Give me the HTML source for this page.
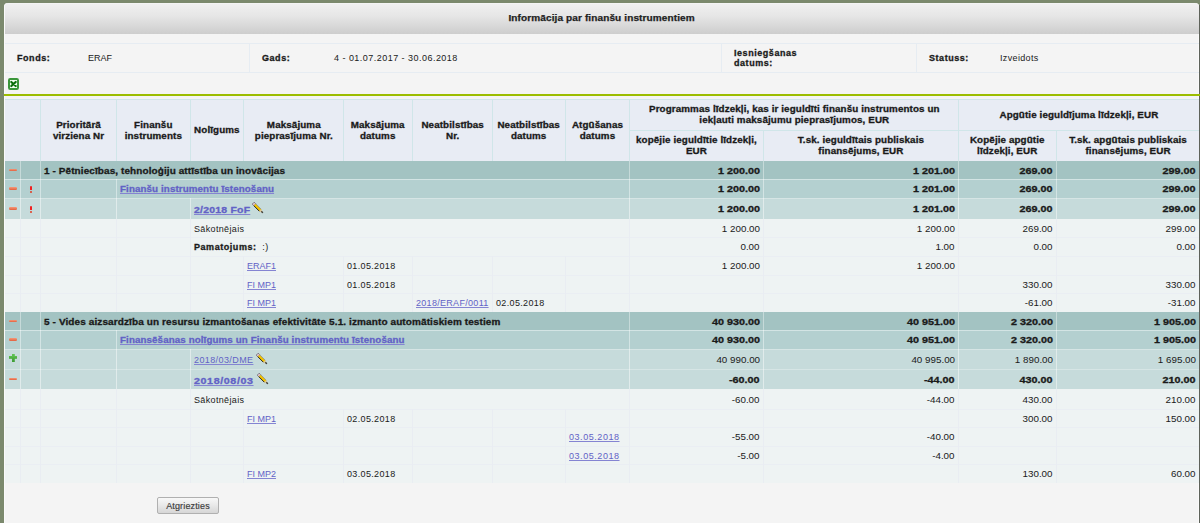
<!DOCTYPE html>
<html><head><meta charset="utf-8"><style>
html,body{margin:0;padding:0}
body{width:1200px;height:523px;overflow:hidden;position:relative;background:#7b896d;font-family:"Liberation Sans", sans-serif;font-size:9px;letter-spacing:0.35px;color:#1a1a1a}
#panel{position:absolute;left:4px;top:3px;width:1195px;height:540px;background:#f4f4f4;border-radius:4px 4px 0 0;box-shadow:inset 1px 0 0 #fafafa, inset -1px 0 0 #fafafa}
#shadow{position:absolute;left:1199px;top:5px;width:1px;height:520px;background:#5e625a}
#title{position:absolute;left:5px;top:4px;width:1194px;height:28px;padding-bottom:2px;background:linear-gradient(#f0f0f0,#e6e6e6 40%,#cdcdcd);border-radius:2px 2px 0 0;display:flex;align-items:center;justify-content:center;font-weight:bold;font-size:9px;letter-spacing:0.1px;-webkit-text-stroke:0.25px #222;color:#222}
.b,b{font-weight:bold;letter-spacing:0.55px;-webkit-text-stroke:0.3px currentColor}
.n{display:inline-block;letter-spacing:0;transform:scaleX(1.09);transform-origin:100% 50%}
.nb{display:inline-block;font-weight:bold;letter-spacing:0;transform:scaleX(1.2);transform-origin:100% 50%;-webkit-text-stroke:0.3px currentColor}
a{color:#6262c6;text-decoration:underline;text-decoration-color:#8484d2}
.lc{letter-spacing:0}
.ld{letter-spacing:0.55px}
.pen{position:absolute;left:calc(100% + 3px);top:-2px}
.pw{position:relative}
.info{position:absolute;top:57.5px;transform:translateY(-50%);white-space:nowrap}
</style></head><body>
<div id="panel"></div>
<div id="shadow"></div>
<div id="title"><span style="display:inline-block;letter-spacing:0.1px;transform:scaleX(1.115)">Informācija par finanšu instrumentiem</span></div>
<div style="position:absolute;left:5px;top:43px;width:1194px;height:1px;background:#e6ecf2"></div>
<div style="position:absolute;left:5px;top:72px;width:1194px;height:1px;background:#e6ecf2"></div>
<div style="position:absolute;left:249px;top:44px;width:1px;height:28px;background:#e6ecf2"></div>
<div style="position:absolute;left:721px;top:44px;width:1px;height:28px;background:#e6ecf2"></div>
<div style="position:absolute;left:916px;top:44px;width:1px;height:28px;background:#e6ecf2"></div>
<div class="info b" style="left:17px">Fonds:</div>
<div class="info" style="left:88px;letter-spacing:0">ERAF</div>
<div class="info b" style="left:262px">Gads:</div>
<div class="info" style="left:334px;letter-spacing:0.47px">4 - 01.07.2017 - 30.06.2018</div>
<div class="info b" style="left:734px;line-height:10px;top:58px">Iesniegšanas<br>datums:</div>
<div class="info b" style="left:929px">Statuss:</div>
<div class="info" style="left:1000px">Izveidots</div>
<svg style="position:absolute;left:8px;top:78px" width="11" height="12" viewBox="0 0 11 12">
<rect x="1" y="1" width="9" height="10" rx="1.2" fill="#f4fff4" stroke="#3a963a" stroke-width="2"/>
<path d="M3.3 4 L7.7 8 M7.7 4 L3.3 8" stroke="#0b6e0b" stroke-width="2.2" stroke-linecap="round"/></svg>
<div style="position:absolute;left:4px;top:94px;width:1196px;height:2px;background:#9cbd00"></div>
<div style="position:absolute;left:5px;top:99px;width:1194px;height:62px;background:#d0e6e9"></div>
<div style="position:absolute;left:5px;top:100px;width:35px;height:61px;background:#e8ecf4;display:flex;align-items:center;justify-content:center;text-align:center;font-weight:bold;letter-spacing:0.1px;-webkit-text-stroke:0.3px #1a1a1a;line-height:11px"><span style="display:inline-block;letter-spacing:0.1px;transform:scaleX(1.09)"></span></div>
<div style="position:absolute;left:41px;top:100px;width:75px;height:61px;background:#e8ecf4;display:flex;align-items:center;justify-content:center;text-align:center;font-weight:bold;letter-spacing:0.1px;-webkit-text-stroke:0.3px #1a1a1a;line-height:11px"><span style="display:inline-block;letter-spacing:0.1px;transform:scaleX(1.09)">Prioritārā<br>virziena Nr</span></div>
<div style="position:absolute;left:117px;top:100px;width:73px;height:61px;background:#e8ecf4;display:flex;align-items:center;justify-content:center;text-align:center;font-weight:bold;letter-spacing:0.1px;-webkit-text-stroke:0.3px #1a1a1a;line-height:11px"><span style="display:inline-block;letter-spacing:0.1px;transform:scaleX(1.09)">Finanšu<br>instruments</span></div>
<div style="position:absolute;left:191px;top:100px;width:52px;height:61px;background:#e8ecf4;display:flex;align-items:center;justify-content:center;text-align:center;font-weight:bold;letter-spacing:0.1px;-webkit-text-stroke:0.3px #1a1a1a;line-height:11px"><span style="display:inline-block;letter-spacing:0.1px;transform:scaleX(1.09)">Nolīgums</span></div>
<div style="position:absolute;left:244px;top:100px;width:99px;height:61px;background:#e8ecf4;display:flex;align-items:center;justify-content:center;text-align:center;font-weight:bold;letter-spacing:0.1px;-webkit-text-stroke:0.3px #1a1a1a;line-height:11px"><span style="display:inline-block;letter-spacing:0.1px;transform:scaleX(1.09)">Maksājuma<br>pieprasījuma Nr.</span></div>
<div style="position:absolute;left:344px;top:100px;width:68px;height:61px;background:#e8ecf4;display:flex;align-items:center;justify-content:center;text-align:center;font-weight:bold;letter-spacing:0.1px;-webkit-text-stroke:0.3px #1a1a1a;line-height:11px"><span style="display:inline-block;letter-spacing:0.1px;transform:scaleX(1.09)">Maksājuma<br>datums</span></div>
<div style="position:absolute;left:413px;top:100px;width:79px;height:61px;background:#e8ecf4;display:flex;align-items:center;justify-content:center;text-align:center;font-weight:bold;letter-spacing:0.1px;-webkit-text-stroke:0.3px #1a1a1a;line-height:11px"><span style="display:inline-block;letter-spacing:0.1px;transform:scaleX(1.09)">Neatbilstības<br>Nr.</span></div>
<div style="position:absolute;left:493px;top:100px;width:72px;height:61px;background:#e8ecf4;display:flex;align-items:center;justify-content:center;text-align:center;font-weight:bold;letter-spacing:0.1px;-webkit-text-stroke:0.3px #1a1a1a;line-height:11px"><span style="display:inline-block;letter-spacing:0.1px;transform:scaleX(1.09)">Neatbilstības<br>datums</span></div>
<div style="position:absolute;left:566px;top:100px;width:63px;height:61px;background:#e8ecf4;display:flex;align-items:center;justify-content:center;text-align:center;font-weight:bold;letter-spacing:0.1px;-webkit-text-stroke:0.3px #1a1a1a;line-height:11px"><span style="display:inline-block;letter-spacing:0.1px;transform:scaleX(1.09)">Atgūšanas<br>datums</span></div>
<div style="position:absolute;left:630px;top:100px;width:328px;height:30px;background:#e8ecf4;display:flex;align-items:center;justify-content:center;text-align:center;font-weight:bold;letter-spacing:0.1px;-webkit-text-stroke:0.3px #1a1a1a;line-height:11px"><span style="display:inline-block;letter-spacing:0.1px;transform:scaleX(1.09)">Programmas līdzekļi, kas ir ieguldīti finanšu instrumentos un<br>iekļauti maksājumu pieprasījumos, EUR</span></div>
<div style="position:absolute;left:959px;top:100px;width:240px;height:30px;background:#e8ecf4;display:flex;align-items:center;justify-content:center;text-align:center;font-weight:bold;letter-spacing:0.1px;-webkit-text-stroke:0.3px #1a1a1a;line-height:11px"><span style="display:inline-block;letter-spacing:0.1px;transform:scaleX(1.09)">Apgūtie ieguldījuma līdzekļi, EUR</span></div>
<div style="position:absolute;left:630px;top:131px;width:133px;height:30px;background:#e8ecf4;display:flex;align-items:center;justify-content:center;text-align:center;font-weight:bold;letter-spacing:0.1px;-webkit-text-stroke:0.3px #1a1a1a;line-height:11px"><span style="display:inline-block;letter-spacing:0.1px;transform:scaleX(1.09)">kopējie ieguldītie līdzekļi,<br>EUR</span></div>
<div style="position:absolute;left:764px;top:131px;width:194px;height:30px;background:#e8ecf4;display:flex;align-items:center;justify-content:center;text-align:center;font-weight:bold;letter-spacing:0.1px;-webkit-text-stroke:0.3px #1a1a1a;line-height:11px"><span style="display:inline-block;letter-spacing:0.1px;transform:scaleX(1.09)">T.sk. ieguldītais publiskais<br>finansējums, EUR</span></div>
<div style="position:absolute;left:959px;top:131px;width:97px;height:30px;background:#e8ecf4;display:flex;align-items:center;justify-content:center;text-align:center;font-weight:bold;letter-spacing:0.1px;-webkit-text-stroke:0.3px #1a1a1a;line-height:11px"><span style="display:inline-block;letter-spacing:0.1px;transform:scaleX(1.09)">Kopējie apgūtie<br>līdzekļi, EUR</span></div>
<div style="position:absolute;left:1057px;top:131px;width:142px;height:30px;background:#e8ecf4;display:flex;align-items:center;justify-content:center;text-align:center;font-weight:bold;letter-spacing:0.1px;-webkit-text-stroke:0.3px #1a1a1a;line-height:11px"><span style="display:inline-block;letter-spacing:0.1px;transform:scaleX(1.09)">T.sk. apgūtais publiskais<br>finansējums, EUR</span></div>
<div style="position:absolute;left:5px;top:161px;width:1194px;height:18px;background:#a3c3c2"></div>
<div style="position:absolute;left:40px;top:161px;width:1px;height:18px;background:rgba(255,255,255,0.38)"></div>
<div style="position:absolute;left:41px;top:162px;width:588px;height:17px;display:flex;align-items:center;justify-content:flex-start;padding:0 4px 0 3px;box-sizing:border-box;white-space:nowrap"><span class="b pw"><span style="display:inline-block;letter-spacing:0.1px;transform:scaleX(1.105);transform-origin:0 50%">1 - Pētniecības, tehnoloģiju attīstība un inovācijas</span></span></div>
<div style="position:absolute;left:629px;top:161px;width:1px;height:18px;background:rgba(255,255,255,0.38)"></div>
<div style="position:absolute;left:630px;top:162px;width:133px;height:17px;display:flex;align-items:center;justify-content:flex-end;padding:0 3px 0 0;box-sizing:border-box;white-space:nowrap"><span class="nb pw">1 200.00</span></div>
<div style="position:absolute;left:763px;top:161px;width:1px;height:18px;background:rgba(255,255,255,0.38)"></div>
<div style="position:absolute;left:764px;top:162px;width:194px;height:17px;display:flex;align-items:center;justify-content:flex-end;padding:0 3px 0 0;box-sizing:border-box;white-space:nowrap"><span class="nb pw">1 201.00</span></div>
<div style="position:absolute;left:958px;top:161px;width:1px;height:18px;background:rgba(255,255,255,0.38)"></div>
<div style="position:absolute;left:959px;top:162px;width:97px;height:17px;display:flex;align-items:center;justify-content:flex-end;padding:0 3px 0 0;box-sizing:border-box;white-space:nowrap"><span class="nb pw">269.00</span></div>
<div style="position:absolute;left:1056px;top:161px;width:1px;height:18px;background:rgba(255,255,255,0.38)"></div>
<div style="position:absolute;left:1057px;top:162px;width:142px;height:17px;display:flex;align-items:center;justify-content:flex-end;padding:0 3px 0 0;box-sizing:border-box;white-space:nowrap"><span class="nb pw">299.00</span></div>
<div style="position:absolute;left:20px;top:161px;width:1px;height:18px;background:rgba(255,255,255,0.38)"></div>
<div style="position:absolute;left:9px;top:168.5px;width:8px;height:2.5px;border-radius:1.25px;background:linear-gradient(#f49a7a,#e2603e)"></div>
<div style="position:absolute;left:5px;top:179px;width:1194px;height:19px;background:#b4d0d0"></div>
<div style="position:absolute;left:5px;top:179px;width:1194px;height:1px;background:rgba(255,255,255,0.42)"></div>
<div style="position:absolute;left:20px;top:179px;width:1px;height:19px;background:rgba(255,255,255,0.42)"></div>
<div style="position:absolute;left:116px;top:179px;width:1px;height:19px;background:rgba(255,255,255,0.42)"></div>
<div style="position:absolute;left:117px;top:180px;width:512px;height:18px;display:flex;align-items:center;justify-content:flex-start;padding:0 4px 0 3px;box-sizing:border-box;white-space:nowrap"><span class="b pw"><a style="display:inline-block;letter-spacing:0.1px;transform:scaleX(1.085);transform-origin:0 50%">Finanšu instrumentu īstenošanu</a></span></div>
<div style="position:absolute;left:629px;top:179px;width:1px;height:19px;background:rgba(255,255,255,0.42)"></div>
<div style="position:absolute;left:630px;top:180px;width:133px;height:18px;display:flex;align-items:center;justify-content:flex-end;padding:0 3px 0 0;box-sizing:border-box;white-space:nowrap"><span class="nb pw">1 200.00</span></div>
<div style="position:absolute;left:763px;top:179px;width:1px;height:19px;background:rgba(255,255,255,0.42)"></div>
<div style="position:absolute;left:764px;top:180px;width:194px;height:18px;display:flex;align-items:center;justify-content:flex-end;padding:0 3px 0 0;box-sizing:border-box;white-space:nowrap"><span class="nb pw">1 201.00</span></div>
<div style="position:absolute;left:958px;top:179px;width:1px;height:19px;background:rgba(255,255,255,0.42)"></div>
<div style="position:absolute;left:959px;top:180px;width:97px;height:18px;display:flex;align-items:center;justify-content:flex-end;padding:0 3px 0 0;box-sizing:border-box;white-space:nowrap"><span class="nb pw">269.00</span></div>
<div style="position:absolute;left:1056px;top:179px;width:1px;height:19px;background:rgba(255,255,255,0.42)"></div>
<div style="position:absolute;left:1057px;top:180px;width:142px;height:18px;display:flex;align-items:center;justify-content:flex-end;padding:0 3px 0 0;box-sizing:border-box;white-space:nowrap"><span class="nb pw">299.00</span></div>
<div style="position:absolute;left:40px;top:179px;width:1px;height:19px;background:rgba(255,255,255,0.42)"></div>
<div style="position:absolute;left:9px;top:187.0px;width:8px;height:2.5px;border-radius:1.25px;background:linear-gradient(#f49a7a,#e2603e)"></div>
<div style="position:absolute;left:29.5px;top:186.0px;width:2.5px;height:3.5px;background:#f02020;border-radius:1px 1px 0.5px 0.5px"></div>
<div style="position:absolute;left:29.5px;top:190.5px;width:2.5px;height:2px;background:#e23a20;border-radius:1px"></div>
<div style="position:absolute;left:5px;top:198px;width:1194px;height:21px;background:#c6dbdb"></div>
<div style="position:absolute;left:5px;top:198px;width:1194px;height:1px;background:rgba(255,255,255,0.28)"></div>
<div style="position:absolute;left:20px;top:198px;width:1px;height:21px;background:rgba(255,255,255,0.45)"></div>
<div style="position:absolute;left:190px;top:198px;width:1px;height:21px;background:rgba(255,255,255,0.45)"></div>
<div style="position:absolute;left:191px;top:199px;width:438px;height:20px;display:flex;align-items:center;justify-content:flex-start;padding:0 4px 0 3px;box-sizing:border-box;white-space:nowrap"><span class="b pw"><a style="display:inline-block;letter-spacing:0.2px;transform:scaleX(1.16);transform-origin:0 50%;margin-right:6.5px;position:relative;top:1px">2/2018 FoF</a><svg class="pen" width="12" height="12" viewBox="0 0 12 12"><path d="M2.15 0.25 L3.75 1.85 L1.85 3.75 L0.25 2.15 Z" fill="#f2cfd6" stroke="#4a4a58" stroke-width="0.7" stroke-linejoin="round"/><path d="M3.75 1.85 L9.25 7.35 L7.35 9.25 L1.85 3.75 Z" fill="#f2c200"/><path d="M1.85 3.75 L7.35 9.25" stroke="#262626" stroke-width="1"/><path d="M3.75 1.85 L9.25 7.35" stroke="#7d8898" stroke-width="0.7"/><path d="M9.25 7.35 L10.9 10.9 L7.35 9.25 Z" fill="#dcc08a"/><path d="M10 9.2 L11 11 L9.2 10 Z" fill="#222" stroke="#222" stroke-width="0.5"/></svg></span></div>
<div style="position:absolute;left:629px;top:198px;width:1px;height:21px;background:rgba(255,255,255,0.45)"></div>
<div style="position:absolute;left:630px;top:199px;width:133px;height:20px;display:flex;align-items:center;justify-content:flex-end;padding:0 3px 0 0;box-sizing:border-box;white-space:nowrap"><span class="nb pw">1 200.00</span></div>
<div style="position:absolute;left:763px;top:198px;width:1px;height:21px;background:rgba(255,255,255,0.45)"></div>
<div style="position:absolute;left:764px;top:199px;width:194px;height:20px;display:flex;align-items:center;justify-content:flex-end;padding:0 3px 0 0;box-sizing:border-box;white-space:nowrap"><span class="nb pw">1 201.00</span></div>
<div style="position:absolute;left:958px;top:198px;width:1px;height:21px;background:rgba(255,255,255,0.45)"></div>
<div style="position:absolute;left:959px;top:199px;width:97px;height:20px;display:flex;align-items:center;justify-content:flex-end;padding:0 3px 0 0;box-sizing:border-box;white-space:nowrap"><span class="nb pw">269.00</span></div>
<div style="position:absolute;left:1056px;top:198px;width:1px;height:21px;background:rgba(255,255,255,0.45)"></div>
<div style="position:absolute;left:1057px;top:199px;width:142px;height:20px;display:flex;align-items:center;justify-content:flex-end;padding:0 3px 0 0;box-sizing:border-box;white-space:nowrap"><span class="nb pw">299.00</span></div>
<div style="position:absolute;left:40px;top:198px;width:1px;height:21px;background:rgba(255,255,255,0.45)"></div>
<div style="position:absolute;left:116px;top:198px;width:1px;height:21px;background:rgba(255,255,255,0.45)"></div>
<div style="position:absolute;left:9px;top:207.0px;width:8px;height:2.5px;border-radius:1.25px;background:linear-gradient(#f49a7a,#e2603e)"></div>
<div style="position:absolute;left:29.5px;top:206.0px;width:2.5px;height:3.5px;background:#f02020;border-radius:1px 1px 0.5px 0.5px"></div>
<div style="position:absolute;left:29.5px;top:210.5px;width:2.5px;height:2px;background:#e23a20;border-radius:1px"></div>
<div style="position:absolute;left:5px;top:219px;width:1194px;height:18px;background:#eef3f3"></div>
<div style="position:absolute;left:190px;top:219px;width:1px;height:18px;background:#e9edf2"></div>
<div style="position:absolute;left:191px;top:220px;width:438px;height:17px;display:flex;align-items:center;justify-content:flex-start;padding:0 4px 0 3px;box-sizing:border-box;white-space:nowrap"><span class=" pw">Sākotnējais</span></div>
<div style="position:absolute;left:629px;top:219px;width:1px;height:18px;background:#e9edf2"></div>
<div style="position:absolute;left:630px;top:220px;width:133px;height:17px;display:flex;align-items:center;justify-content:flex-end;padding:0 3px 0 0;box-sizing:border-box;white-space:nowrap"><span class="n pw">1 200.00</span></div>
<div style="position:absolute;left:763px;top:219px;width:1px;height:18px;background:#e9edf2"></div>
<div style="position:absolute;left:764px;top:220px;width:194px;height:17px;display:flex;align-items:center;justify-content:flex-end;padding:0 3px 0 0;box-sizing:border-box;white-space:nowrap"><span class="n pw">1 200.00</span></div>
<div style="position:absolute;left:958px;top:219px;width:1px;height:18px;background:#e9edf2"></div>
<div style="position:absolute;left:959px;top:220px;width:97px;height:17px;display:flex;align-items:center;justify-content:flex-end;padding:0 3px 0 0;box-sizing:border-box;white-space:nowrap"><span class="n pw">269.00</span></div>
<div style="position:absolute;left:1056px;top:219px;width:1px;height:18px;background:#e9edf2"></div>
<div style="position:absolute;left:1057px;top:220px;width:142px;height:17px;display:flex;align-items:center;justify-content:flex-end;padding:0 3px 0 0;box-sizing:border-box;white-space:nowrap"><span class="n pw">299.00</span></div>
<div style="position:absolute;left:20px;top:219px;width:1px;height:18px;background:#e9edf2"></div>
<div style="position:absolute;left:40px;top:219px;width:1px;height:18px;background:#e9edf2"></div>
<div style="position:absolute;left:116px;top:219px;width:1px;height:18px;background:#e9edf2"></div>
<div style="position:absolute;left:5px;top:237px;width:1194px;height:19px;background:#eef3f3"></div>
<div style="position:absolute;left:5px;top:237px;width:1194px;height:1px;background:#eaeef3"></div>
<div style="position:absolute;left:190px;top:237px;width:1px;height:19px;background:#e9edf2"></div>
<div style="position:absolute;left:191px;top:238px;width:438px;height:18px;display:flex;align-items:center;justify-content:flex-start;padding:0 4px 0 3px;box-sizing:border-box;white-space:nowrap"><span class=" pw"><b>Pamatojums:</b>&nbsp; :)</span></div>
<div style="position:absolute;left:629px;top:237px;width:1px;height:19px;background:#e9edf2"></div>
<div style="position:absolute;left:630px;top:238px;width:133px;height:18px;display:flex;align-items:center;justify-content:flex-end;padding:0 3px 0 0;box-sizing:border-box;white-space:nowrap"><span class="n pw">0.00</span></div>
<div style="position:absolute;left:763px;top:237px;width:1px;height:19px;background:#e9edf2"></div>
<div style="position:absolute;left:764px;top:238px;width:194px;height:18px;display:flex;align-items:center;justify-content:flex-end;padding:0 3px 0 0;box-sizing:border-box;white-space:nowrap"><span class="n pw">1.00</span></div>
<div style="position:absolute;left:958px;top:237px;width:1px;height:19px;background:#e9edf2"></div>
<div style="position:absolute;left:959px;top:238px;width:97px;height:18px;display:flex;align-items:center;justify-content:flex-end;padding:0 3px 0 0;box-sizing:border-box;white-space:nowrap"><span class="n pw">0.00</span></div>
<div style="position:absolute;left:1056px;top:237px;width:1px;height:19px;background:#e9edf2"></div>
<div style="position:absolute;left:1057px;top:238px;width:142px;height:18px;display:flex;align-items:center;justify-content:flex-end;padding:0 3px 0 0;box-sizing:border-box;white-space:nowrap"><span class="n pw">0.00</span></div>
<div style="position:absolute;left:20px;top:237px;width:1px;height:19px;background:#e9edf2"></div>
<div style="position:absolute;left:40px;top:237px;width:1px;height:19px;background:#e9edf2"></div>
<div style="position:absolute;left:116px;top:237px;width:1px;height:19px;background:#e9edf2"></div>
<div style="position:absolute;left:5px;top:256px;width:1194px;height:19px;background:#eef3f3"></div>
<div style="position:absolute;left:5px;top:256px;width:1194px;height:1px;background:#eaeef3"></div>
<div style="position:absolute;left:243px;top:256px;width:1px;height:19px;background:#e9edf2"></div>
<div style="position:absolute;left:244px;top:257px;width:99px;height:18px;display:flex;align-items:center;justify-content:flex-start;padding:0 4px 0 3px;box-sizing:border-box;white-space:nowrap"><span class=" pw"><a class="lc">ERAF1</a></span></div>
<div style="position:absolute;left:343px;top:256px;width:1px;height:19px;background:#e9edf2"></div>
<div style="position:absolute;left:344px;top:257px;width:68px;height:18px;display:flex;align-items:center;justify-content:flex-start;padding:0 4px 0 3px;box-sizing:border-box;white-space:nowrap"><span class=" pw">01.05.2018</span></div>
<div style="position:absolute;left:629px;top:256px;width:1px;height:19px;background:#e9edf2"></div>
<div style="position:absolute;left:630px;top:257px;width:133px;height:18px;display:flex;align-items:center;justify-content:flex-end;padding:0 3px 0 0;box-sizing:border-box;white-space:nowrap"><span class="n pw">1 200.00</span></div>
<div style="position:absolute;left:763px;top:256px;width:1px;height:19px;background:#e9edf2"></div>
<div style="position:absolute;left:764px;top:257px;width:194px;height:18px;display:flex;align-items:center;justify-content:flex-end;padding:0 3px 0 0;box-sizing:border-box;white-space:nowrap"><span class="n pw">1 200.00</span></div>
<div style="position:absolute;left:20px;top:256px;width:1px;height:19px;background:#e9edf2"></div>
<div style="position:absolute;left:40px;top:256px;width:1px;height:19px;background:#e9edf2"></div>
<div style="position:absolute;left:116px;top:256px;width:1px;height:19px;background:#e9edf2"></div>
<div style="position:absolute;left:190px;top:256px;width:1px;height:19px;background:#e9edf2"></div>
<div style="position:absolute;left:412px;top:256px;width:1px;height:19px;background:#e9edf2"></div>
<div style="position:absolute;left:492px;top:256px;width:1px;height:19px;background:#e9edf2"></div>
<div style="position:absolute;left:565px;top:256px;width:1px;height:19px;background:#e9edf2"></div>
<div style="position:absolute;left:958px;top:256px;width:1px;height:19px;background:#e9edf2"></div>
<div style="position:absolute;left:1056px;top:256px;width:1px;height:19px;background:#e9edf2"></div>
<div style="position:absolute;left:5px;top:275px;width:1194px;height:18px;background:#eef3f3"></div>
<div style="position:absolute;left:5px;top:275px;width:1194px;height:1px;background:#eaeef3"></div>
<div style="position:absolute;left:243px;top:275px;width:1px;height:18px;background:#e9edf2"></div>
<div style="position:absolute;left:244px;top:276px;width:99px;height:17px;display:flex;align-items:center;justify-content:flex-start;padding:0 4px 0 3px;box-sizing:border-box;white-space:nowrap"><span class=" pw"><a class="lc">FI MP1</a></span></div>
<div style="position:absolute;left:343px;top:275px;width:1px;height:18px;background:#e9edf2"></div>
<div style="position:absolute;left:344px;top:276px;width:68px;height:17px;display:flex;align-items:center;justify-content:flex-start;padding:0 4px 0 3px;box-sizing:border-box;white-space:nowrap"><span class=" pw">01.05.2018</span></div>
<div style="position:absolute;left:958px;top:275px;width:1px;height:18px;background:#e9edf2"></div>
<div style="position:absolute;left:959px;top:276px;width:97px;height:17px;display:flex;align-items:center;justify-content:flex-end;padding:0 3px 0 0;box-sizing:border-box;white-space:nowrap"><span class="n pw">330.00</span></div>
<div style="position:absolute;left:1056px;top:275px;width:1px;height:18px;background:#e9edf2"></div>
<div style="position:absolute;left:1057px;top:276px;width:142px;height:17px;display:flex;align-items:center;justify-content:flex-end;padding:0 3px 0 0;box-sizing:border-box;white-space:nowrap"><span class="n pw">330.00</span></div>
<div style="position:absolute;left:20px;top:275px;width:1px;height:18px;background:#e9edf2"></div>
<div style="position:absolute;left:40px;top:275px;width:1px;height:18px;background:#e9edf2"></div>
<div style="position:absolute;left:116px;top:275px;width:1px;height:18px;background:#e9edf2"></div>
<div style="position:absolute;left:190px;top:275px;width:1px;height:18px;background:#e9edf2"></div>
<div style="position:absolute;left:412px;top:275px;width:1px;height:18px;background:#e9edf2"></div>
<div style="position:absolute;left:492px;top:275px;width:1px;height:18px;background:#e9edf2"></div>
<div style="position:absolute;left:565px;top:275px;width:1px;height:18px;background:#e9edf2"></div>
<div style="position:absolute;left:629px;top:275px;width:1px;height:18px;background:#e9edf2"></div>
<div style="position:absolute;left:763px;top:275px;width:1px;height:18px;background:#e9edf2"></div>
<div style="position:absolute;left:5px;top:293px;width:1194px;height:19px;background:#eef3f3"></div>
<div style="position:absolute;left:5px;top:293px;width:1194px;height:1px;background:#eaeef3"></div>
<div style="position:absolute;left:243px;top:293px;width:1px;height:19px;background:#e9edf2"></div>
<div style="position:absolute;left:244px;top:294px;width:99px;height:18px;display:flex;align-items:center;justify-content:flex-start;padding:0 4px 0 3px;box-sizing:border-box;white-space:nowrap"><span class=" pw"><a class="lc">FI MP1</a></span></div>
<div style="position:absolute;left:412px;top:293px;width:1px;height:19px;background:#e9edf2"></div>
<div style="position:absolute;left:413px;top:294px;width:79px;height:18px;display:flex;align-items:center;justify-content:flex-start;padding:0 4px 0 3px;box-sizing:border-box;white-space:nowrap"><span class=" pw"><a style="letter-spacing:0.3px">2018/ERAF/0011</a></span></div>
<div style="position:absolute;left:492px;top:293px;width:1px;height:19px;background:#e9edf2"></div>
<div style="position:absolute;left:493px;top:294px;width:72px;height:18px;display:flex;align-items:center;justify-content:flex-start;padding:0 4px 0 3px;box-sizing:border-box;white-space:nowrap"><span class=" pw">02.05.2018</span></div>
<div style="position:absolute;left:958px;top:293px;width:1px;height:19px;background:#e9edf2"></div>
<div style="position:absolute;left:959px;top:294px;width:97px;height:18px;display:flex;align-items:center;justify-content:flex-end;padding:0 3px 0 0;box-sizing:border-box;white-space:nowrap"><span class="n pw">-61.00</span></div>
<div style="position:absolute;left:1056px;top:293px;width:1px;height:19px;background:#e9edf2"></div>
<div style="position:absolute;left:1057px;top:294px;width:142px;height:18px;display:flex;align-items:center;justify-content:flex-end;padding:0 3px 0 0;box-sizing:border-box;white-space:nowrap"><span class="n pw">-31.00</span></div>
<div style="position:absolute;left:20px;top:293px;width:1px;height:19px;background:#e9edf2"></div>
<div style="position:absolute;left:40px;top:293px;width:1px;height:19px;background:#e9edf2"></div>
<div style="position:absolute;left:116px;top:293px;width:1px;height:19px;background:#e9edf2"></div>
<div style="position:absolute;left:190px;top:293px;width:1px;height:19px;background:#e9edf2"></div>
<div style="position:absolute;left:343px;top:293px;width:1px;height:19px;background:#e9edf2"></div>
<div style="position:absolute;left:565px;top:293px;width:1px;height:19px;background:#e9edf2"></div>
<div style="position:absolute;left:629px;top:293px;width:1px;height:19px;background:#e9edf2"></div>
<div style="position:absolute;left:763px;top:293px;width:1px;height:19px;background:#e9edf2"></div>
<div style="position:absolute;left:5px;top:312px;width:1194px;height:18px;background:#a3c3c2"></div>
<div style="position:absolute;left:40px;top:312px;width:1px;height:18px;background:rgba(255,255,255,0.38)"></div>
<div style="position:absolute;left:41px;top:313px;width:588px;height:17px;display:flex;align-items:center;justify-content:flex-start;padding:0 4px 0 3px;box-sizing:border-box;white-space:nowrap"><span class="b pw"><span style="display:inline-block;letter-spacing:0.1px;transform:scaleX(1.11);transform-origin:0 50%">5 - Vides aizsardzība un resursu izmantošanas efektivitāte 5.1. izmanto automātiskiem testiem</span></span></div>
<div style="position:absolute;left:629px;top:312px;width:1px;height:18px;background:rgba(255,255,255,0.38)"></div>
<div style="position:absolute;left:630px;top:313px;width:133px;height:17px;display:flex;align-items:center;justify-content:flex-end;padding:0 3px 0 0;box-sizing:border-box;white-space:nowrap"><span class="nb pw">40 930.00</span></div>
<div style="position:absolute;left:763px;top:312px;width:1px;height:18px;background:rgba(255,255,255,0.38)"></div>
<div style="position:absolute;left:764px;top:313px;width:194px;height:17px;display:flex;align-items:center;justify-content:flex-end;padding:0 3px 0 0;box-sizing:border-box;white-space:nowrap"><span class="nb pw">40 951.00</span></div>
<div style="position:absolute;left:958px;top:312px;width:1px;height:18px;background:rgba(255,255,255,0.38)"></div>
<div style="position:absolute;left:959px;top:313px;width:97px;height:17px;display:flex;align-items:center;justify-content:flex-end;padding:0 3px 0 0;box-sizing:border-box;white-space:nowrap"><span class="nb pw">2 320.00</span></div>
<div style="position:absolute;left:1056px;top:312px;width:1px;height:18px;background:rgba(255,255,255,0.38)"></div>
<div style="position:absolute;left:1057px;top:313px;width:142px;height:17px;display:flex;align-items:center;justify-content:flex-end;padding:0 3px 0 0;box-sizing:border-box;white-space:nowrap"><span class="nb pw">1 905.00</span></div>
<div style="position:absolute;left:20px;top:312px;width:1px;height:18px;background:rgba(255,255,255,0.38)"></div>
<div style="position:absolute;left:9px;top:319.5px;width:8px;height:2.5px;border-radius:1.25px;background:linear-gradient(#f49a7a,#e2603e)"></div>
<div style="position:absolute;left:5px;top:330px;width:1194px;height:19px;background:#b4d0d0"></div>
<div style="position:absolute;left:5px;top:330px;width:1194px;height:1px;background:rgba(255,255,255,0.42)"></div>
<div style="position:absolute;left:116px;top:330px;width:1px;height:19px;background:rgba(255,255,255,0.42)"></div>
<div style="position:absolute;left:117px;top:331px;width:512px;height:18px;display:flex;align-items:center;justify-content:flex-start;padding:0 4px 0 3px;box-sizing:border-box;white-space:nowrap"><span class="b pw"><a style="display:inline-block;letter-spacing:0.1px;transform:scaleX(1.084);transform-origin:0 50%">Finansēšanas nolīgums un Finanšu instrumentu īstenošanu</a></span></div>
<div style="position:absolute;left:629px;top:330px;width:1px;height:19px;background:rgba(255,255,255,0.42)"></div>
<div style="position:absolute;left:630px;top:331px;width:133px;height:18px;display:flex;align-items:center;justify-content:flex-end;padding:0 3px 0 0;box-sizing:border-box;white-space:nowrap"><span class="nb pw">40 930.00</span></div>
<div style="position:absolute;left:763px;top:330px;width:1px;height:19px;background:rgba(255,255,255,0.42)"></div>
<div style="position:absolute;left:764px;top:331px;width:194px;height:18px;display:flex;align-items:center;justify-content:flex-end;padding:0 3px 0 0;box-sizing:border-box;white-space:nowrap"><span class="nb pw">40 951.00</span></div>
<div style="position:absolute;left:958px;top:330px;width:1px;height:19px;background:rgba(255,255,255,0.42)"></div>
<div style="position:absolute;left:959px;top:331px;width:97px;height:18px;display:flex;align-items:center;justify-content:flex-end;padding:0 3px 0 0;box-sizing:border-box;white-space:nowrap"><span class="nb pw">2 320.00</span></div>
<div style="position:absolute;left:1056px;top:330px;width:1px;height:19px;background:rgba(255,255,255,0.42)"></div>
<div style="position:absolute;left:1057px;top:331px;width:142px;height:18px;display:flex;align-items:center;justify-content:flex-end;padding:0 3px 0 0;box-sizing:border-box;white-space:nowrap"><span class="nb pw">1 905.00</span></div>
<div style="position:absolute;left:20px;top:330px;width:1px;height:19px;background:rgba(255,255,255,0.42)"></div>
<div style="position:absolute;left:40px;top:330px;width:1px;height:19px;background:rgba(255,255,255,0.42)"></div>
<div style="position:absolute;left:9px;top:338.0px;width:8px;height:2.5px;border-radius:1.25px;background:linear-gradient(#f49a7a,#e2603e)"></div>
<div style="position:absolute;left:5px;top:349px;width:1194px;height:20px;background:#c6dbdb"></div>
<div style="position:absolute;left:5px;top:349px;width:1194px;height:1px;background:rgba(255,255,255,0.28)"></div>
<div style="position:absolute;left:190px;top:349px;width:1px;height:20px;background:rgba(255,255,255,0.45)"></div>
<div style="position:absolute;left:191px;top:350px;width:438px;height:19px;display:flex;align-items:center;justify-content:flex-start;padding:0 4px 0 3px;box-sizing:border-box;white-space:nowrap"><span class=" pw"><a style="letter-spacing:0.4px">2018/03/DME</a><svg class="pen" width="12" height="12" viewBox="0 0 12 12"><path d="M2.15 0.25 L3.75 1.85 L1.85 3.75 L0.25 2.15 Z" fill="#f2cfd6" stroke="#4a4a58" stroke-width="0.7" stroke-linejoin="round"/><path d="M3.75 1.85 L9.25 7.35 L7.35 9.25 L1.85 3.75 Z" fill="#f2c200"/><path d="M1.85 3.75 L7.35 9.25" stroke="#262626" stroke-width="1"/><path d="M3.75 1.85 L9.25 7.35" stroke="#7d8898" stroke-width="0.7"/><path d="M9.25 7.35 L10.9 10.9 L7.35 9.25 Z" fill="#dcc08a"/><path d="M10 9.2 L11 11 L9.2 10 Z" fill="#222" stroke="#222" stroke-width="0.5"/></svg></span></div>
<div style="position:absolute;left:629px;top:349px;width:1px;height:20px;background:rgba(255,255,255,0.45)"></div>
<div style="position:absolute;left:630px;top:350px;width:133px;height:19px;display:flex;align-items:center;justify-content:flex-end;padding:0 3px 0 0;box-sizing:border-box;white-space:nowrap"><span class="n pw">40 990.00</span></div>
<div style="position:absolute;left:763px;top:349px;width:1px;height:20px;background:rgba(255,255,255,0.45)"></div>
<div style="position:absolute;left:764px;top:350px;width:194px;height:19px;display:flex;align-items:center;justify-content:flex-end;padding:0 3px 0 0;box-sizing:border-box;white-space:nowrap"><span class="n pw">40 995.00</span></div>
<div style="position:absolute;left:958px;top:349px;width:1px;height:20px;background:rgba(255,255,255,0.45)"></div>
<div style="position:absolute;left:959px;top:350px;width:97px;height:19px;display:flex;align-items:center;justify-content:flex-end;padding:0 3px 0 0;box-sizing:border-box;white-space:nowrap"><span class="n pw">1 890.00</span></div>
<div style="position:absolute;left:1056px;top:349px;width:1px;height:20px;background:rgba(255,255,255,0.45)"></div>
<div style="position:absolute;left:1057px;top:350px;width:142px;height:19px;display:flex;align-items:center;justify-content:flex-end;padding:0 3px 0 0;box-sizing:border-box;white-space:nowrap"><span class="n pw">1 695.00</span></div>
<div style="position:absolute;left:20px;top:349px;width:1px;height:20px;background:rgba(255,255,255,0.45)"></div>
<div style="position:absolute;left:40px;top:349px;width:1px;height:20px;background:rgba(255,255,255,0.45)"></div>
<div style="position:absolute;left:116px;top:349px;width:1px;height:20px;background:rgba(255,255,255,0.45)"></div>
<div style="position:absolute;left:9px;top:353.8px;width:8px;height:8px;background:linear-gradient(#5cc050,#48a83c) center/8px 2.8px no-repeat,linear-gradient(#62c456,#3c9c34) center/2.8px 8px no-repeat;border-radius:1px"></div>
<div style="position:absolute;left:5px;top:369px;width:1194px;height:20px;background:#c6dbdb"></div>
<div style="position:absolute;left:5px;top:369px;width:1194px;height:1px;background:rgba(255,255,255,0.28)"></div>
<div style="position:absolute;left:190px;top:369px;width:1px;height:20px;background:rgba(255,255,255,0.45)"></div>
<div style="position:absolute;left:191px;top:370px;width:438px;height:19px;display:flex;align-items:center;justify-content:flex-start;padding:0 4px 0 3px;box-sizing:border-box;white-space:nowrap"><span class="b pw"><a style="display:inline-block;letter-spacing:0.5px;transform:scaleX(1.19);transform-origin:0 50%;margin-right:9.5px;position:relative;top:1px">2018/08/03</a><svg class="pen" width="12" height="12" viewBox="0 0 12 12"><path d="M2.15 0.25 L3.75 1.85 L1.85 3.75 L0.25 2.15 Z" fill="#f2cfd6" stroke="#4a4a58" stroke-width="0.7" stroke-linejoin="round"/><path d="M3.75 1.85 L9.25 7.35 L7.35 9.25 L1.85 3.75 Z" fill="#f2c200"/><path d="M1.85 3.75 L7.35 9.25" stroke="#262626" stroke-width="1"/><path d="M3.75 1.85 L9.25 7.35" stroke="#7d8898" stroke-width="0.7"/><path d="M9.25 7.35 L10.9 10.9 L7.35 9.25 Z" fill="#dcc08a"/><path d="M10 9.2 L11 11 L9.2 10 Z" fill="#222" stroke="#222" stroke-width="0.5"/></svg></span></div>
<div style="position:absolute;left:629px;top:369px;width:1px;height:20px;background:rgba(255,255,255,0.45)"></div>
<div style="position:absolute;left:630px;top:370px;width:133px;height:19px;display:flex;align-items:center;justify-content:flex-end;padding:0 3px 0 0;box-sizing:border-box;white-space:nowrap"><span class="nb pw">-60.00</span></div>
<div style="position:absolute;left:763px;top:369px;width:1px;height:20px;background:rgba(255,255,255,0.45)"></div>
<div style="position:absolute;left:764px;top:370px;width:194px;height:19px;display:flex;align-items:center;justify-content:flex-end;padding:0 3px 0 0;box-sizing:border-box;white-space:nowrap"><span class="nb pw">-44.00</span></div>
<div style="position:absolute;left:958px;top:369px;width:1px;height:20px;background:rgba(255,255,255,0.45)"></div>
<div style="position:absolute;left:959px;top:370px;width:97px;height:19px;display:flex;align-items:center;justify-content:flex-end;padding:0 3px 0 0;box-sizing:border-box;white-space:nowrap"><span class="nb pw">430.00</span></div>
<div style="position:absolute;left:1056px;top:369px;width:1px;height:20px;background:rgba(255,255,255,0.45)"></div>
<div style="position:absolute;left:1057px;top:370px;width:142px;height:19px;display:flex;align-items:center;justify-content:flex-end;padding:0 3px 0 0;box-sizing:border-box;white-space:nowrap"><span class="nb pw">210.00</span></div>
<div style="position:absolute;left:20px;top:369px;width:1px;height:20px;background:rgba(255,255,255,0.45)"></div>
<div style="position:absolute;left:40px;top:369px;width:1px;height:20px;background:rgba(255,255,255,0.45)"></div>
<div style="position:absolute;left:116px;top:369px;width:1px;height:20px;background:rgba(255,255,255,0.45)"></div>
<div style="position:absolute;left:9px;top:377.5px;width:8px;height:2.5px;border-radius:1.25px;background:linear-gradient(#f49a7a,#e2603e)"></div>
<div style="position:absolute;left:5px;top:389px;width:1194px;height:20px;background:#eef3f3"></div>
<div style="position:absolute;left:190px;top:389px;width:1px;height:20px;background:#e9edf2"></div>
<div style="position:absolute;left:191px;top:390px;width:438px;height:19px;display:flex;align-items:center;justify-content:flex-start;padding:0 4px 0 3px;box-sizing:border-box;white-space:nowrap"><span class=" pw">Sākotnējais</span></div>
<div style="position:absolute;left:629px;top:389px;width:1px;height:20px;background:#e9edf2"></div>
<div style="position:absolute;left:630px;top:390px;width:133px;height:19px;display:flex;align-items:center;justify-content:flex-end;padding:0 3px 0 0;box-sizing:border-box;white-space:nowrap"><span class="n pw">-60.00</span></div>
<div style="position:absolute;left:763px;top:389px;width:1px;height:20px;background:#e9edf2"></div>
<div style="position:absolute;left:764px;top:390px;width:194px;height:19px;display:flex;align-items:center;justify-content:flex-end;padding:0 3px 0 0;box-sizing:border-box;white-space:nowrap"><span class="n pw">-44.00</span></div>
<div style="position:absolute;left:958px;top:389px;width:1px;height:20px;background:#e9edf2"></div>
<div style="position:absolute;left:959px;top:390px;width:97px;height:19px;display:flex;align-items:center;justify-content:flex-end;padding:0 3px 0 0;box-sizing:border-box;white-space:nowrap"><span class="n pw">430.00</span></div>
<div style="position:absolute;left:1056px;top:389px;width:1px;height:20px;background:#e9edf2"></div>
<div style="position:absolute;left:1057px;top:390px;width:142px;height:19px;display:flex;align-items:center;justify-content:flex-end;padding:0 3px 0 0;box-sizing:border-box;white-space:nowrap"><span class="n pw">210.00</span></div>
<div style="position:absolute;left:20px;top:389px;width:1px;height:20px;background:#e9edf2"></div>
<div style="position:absolute;left:40px;top:389px;width:1px;height:20px;background:#e9edf2"></div>
<div style="position:absolute;left:116px;top:389px;width:1px;height:20px;background:#e9edf2"></div>
<div style="position:absolute;left:5px;top:409px;width:1194px;height:18px;background:#eef3f3"></div>
<div style="position:absolute;left:5px;top:409px;width:1194px;height:1px;background:#eaeef3"></div>
<div style="position:absolute;left:243px;top:409px;width:1px;height:18px;background:#e9edf2"></div>
<div style="position:absolute;left:244px;top:410px;width:99px;height:17px;display:flex;align-items:center;justify-content:flex-start;padding:0 4px 0 3px;box-sizing:border-box;white-space:nowrap"><span class=" pw"><a class="lc">FI MP1</a></span></div>
<div style="position:absolute;left:343px;top:409px;width:1px;height:18px;background:#e9edf2"></div>
<div style="position:absolute;left:344px;top:410px;width:68px;height:17px;display:flex;align-items:center;justify-content:flex-start;padding:0 4px 0 3px;box-sizing:border-box;white-space:nowrap"><span class=" pw">02.05.2018</span></div>
<div style="position:absolute;left:958px;top:409px;width:1px;height:18px;background:#e9edf2"></div>
<div style="position:absolute;left:959px;top:410px;width:97px;height:17px;display:flex;align-items:center;justify-content:flex-end;padding:0 3px 0 0;box-sizing:border-box;white-space:nowrap"><span class="n pw">300.00</span></div>
<div style="position:absolute;left:1056px;top:409px;width:1px;height:18px;background:#e9edf2"></div>
<div style="position:absolute;left:1057px;top:410px;width:142px;height:17px;display:flex;align-items:center;justify-content:flex-end;padding:0 3px 0 0;box-sizing:border-box;white-space:nowrap"><span class="n pw">150.00</span></div>
<div style="position:absolute;left:20px;top:409px;width:1px;height:18px;background:#e9edf2"></div>
<div style="position:absolute;left:40px;top:409px;width:1px;height:18px;background:#e9edf2"></div>
<div style="position:absolute;left:116px;top:409px;width:1px;height:18px;background:#e9edf2"></div>
<div style="position:absolute;left:190px;top:409px;width:1px;height:18px;background:#e9edf2"></div>
<div style="position:absolute;left:412px;top:409px;width:1px;height:18px;background:#e9edf2"></div>
<div style="position:absolute;left:492px;top:409px;width:1px;height:18px;background:#e9edf2"></div>
<div style="position:absolute;left:565px;top:409px;width:1px;height:18px;background:#e9edf2"></div>
<div style="position:absolute;left:629px;top:409px;width:1px;height:18px;background:#e9edf2"></div>
<div style="position:absolute;left:763px;top:409px;width:1px;height:18px;background:#e9edf2"></div>
<div style="position:absolute;left:5px;top:427px;width:1194px;height:19px;background:#eef3f3"></div>
<div style="position:absolute;left:5px;top:427px;width:1194px;height:1px;background:#eaeef3"></div>
<div style="position:absolute;left:565px;top:427px;width:1px;height:19px;background:#e9edf2"></div>
<div style="position:absolute;left:566px;top:428px;width:63px;height:18px;display:flex;align-items:center;justify-content:flex-start;padding:0 4px 0 3px;box-sizing:border-box;white-space:nowrap"><span class=" pw"><a class="ld">03.05.2018</a></span></div>
<div style="position:absolute;left:629px;top:427px;width:1px;height:19px;background:#e9edf2"></div>
<div style="position:absolute;left:630px;top:428px;width:133px;height:18px;display:flex;align-items:center;justify-content:flex-end;padding:0 3px 0 0;box-sizing:border-box;white-space:nowrap"><span class="n pw">-55.00</span></div>
<div style="position:absolute;left:763px;top:427px;width:1px;height:19px;background:#e9edf2"></div>
<div style="position:absolute;left:764px;top:428px;width:194px;height:18px;display:flex;align-items:center;justify-content:flex-end;padding:0 3px 0 0;box-sizing:border-box;white-space:nowrap"><span class="n pw">-40.00</span></div>
<div style="position:absolute;left:20px;top:427px;width:1px;height:19px;background:#e9edf2"></div>
<div style="position:absolute;left:40px;top:427px;width:1px;height:19px;background:#e9edf2"></div>
<div style="position:absolute;left:116px;top:427px;width:1px;height:19px;background:#e9edf2"></div>
<div style="position:absolute;left:190px;top:427px;width:1px;height:19px;background:#e9edf2"></div>
<div style="position:absolute;left:243px;top:427px;width:1px;height:19px;background:#e9edf2"></div>
<div style="position:absolute;left:343px;top:427px;width:1px;height:19px;background:#e9edf2"></div>
<div style="position:absolute;left:412px;top:427px;width:1px;height:19px;background:#e9edf2"></div>
<div style="position:absolute;left:492px;top:427px;width:1px;height:19px;background:#e9edf2"></div>
<div style="position:absolute;left:958px;top:427px;width:1px;height:19px;background:#e9edf2"></div>
<div style="position:absolute;left:1056px;top:427px;width:1px;height:19px;background:#e9edf2"></div>
<div style="position:absolute;left:5px;top:446px;width:1194px;height:18px;background:#eef3f3"></div>
<div style="position:absolute;left:5px;top:446px;width:1194px;height:1px;background:#eaeef3"></div>
<div style="position:absolute;left:565px;top:446px;width:1px;height:18px;background:#e9edf2"></div>
<div style="position:absolute;left:566px;top:447px;width:63px;height:17px;display:flex;align-items:center;justify-content:flex-start;padding:0 4px 0 3px;box-sizing:border-box;white-space:nowrap"><span class=" pw"><a class="ld">03.05.2018</a></span></div>
<div style="position:absolute;left:629px;top:446px;width:1px;height:18px;background:#e9edf2"></div>
<div style="position:absolute;left:630px;top:447px;width:133px;height:17px;display:flex;align-items:center;justify-content:flex-end;padding:0 3px 0 0;box-sizing:border-box;white-space:nowrap"><span class="n pw">-5.00</span></div>
<div style="position:absolute;left:763px;top:446px;width:1px;height:18px;background:#e9edf2"></div>
<div style="position:absolute;left:764px;top:447px;width:194px;height:17px;display:flex;align-items:center;justify-content:flex-end;padding:0 3px 0 0;box-sizing:border-box;white-space:nowrap"><span class="n pw">-4.00</span></div>
<div style="position:absolute;left:20px;top:446px;width:1px;height:18px;background:#e9edf2"></div>
<div style="position:absolute;left:40px;top:446px;width:1px;height:18px;background:#e9edf2"></div>
<div style="position:absolute;left:116px;top:446px;width:1px;height:18px;background:#e9edf2"></div>
<div style="position:absolute;left:190px;top:446px;width:1px;height:18px;background:#e9edf2"></div>
<div style="position:absolute;left:243px;top:446px;width:1px;height:18px;background:#e9edf2"></div>
<div style="position:absolute;left:343px;top:446px;width:1px;height:18px;background:#e9edf2"></div>
<div style="position:absolute;left:412px;top:446px;width:1px;height:18px;background:#e9edf2"></div>
<div style="position:absolute;left:492px;top:446px;width:1px;height:18px;background:#e9edf2"></div>
<div style="position:absolute;left:958px;top:446px;width:1px;height:18px;background:#e9edf2"></div>
<div style="position:absolute;left:1056px;top:446px;width:1px;height:18px;background:#e9edf2"></div>
<div style="position:absolute;left:5px;top:464px;width:1194px;height:19px;background:#eef3f3"></div>
<div style="position:absolute;left:5px;top:464px;width:1194px;height:1px;background:#eaeef3"></div>
<div style="position:absolute;left:243px;top:464px;width:1px;height:19px;background:#e9edf2"></div>
<div style="position:absolute;left:244px;top:465px;width:99px;height:18px;display:flex;align-items:center;justify-content:flex-start;padding:0 4px 0 3px;box-sizing:border-box;white-space:nowrap"><span class=" pw"><a class="lc">FI MP2</a></span></div>
<div style="position:absolute;left:343px;top:464px;width:1px;height:19px;background:#e9edf2"></div>
<div style="position:absolute;left:344px;top:465px;width:68px;height:18px;display:flex;align-items:center;justify-content:flex-start;padding:0 4px 0 3px;box-sizing:border-box;white-space:nowrap"><span class=" pw">03.05.2018</span></div>
<div style="position:absolute;left:958px;top:464px;width:1px;height:19px;background:#e9edf2"></div>
<div style="position:absolute;left:959px;top:465px;width:97px;height:18px;display:flex;align-items:center;justify-content:flex-end;padding:0 3px 0 0;box-sizing:border-box;white-space:nowrap"><span class="n pw">130.00</span></div>
<div style="position:absolute;left:1056px;top:464px;width:1px;height:19px;background:#e9edf2"></div>
<div style="position:absolute;left:1057px;top:465px;width:142px;height:18px;display:flex;align-items:center;justify-content:flex-end;padding:0 3px 0 0;box-sizing:border-box;white-space:nowrap"><span class="n pw">60.00</span></div>
<div style="position:absolute;left:20px;top:464px;width:1px;height:19px;background:#e9edf2"></div>
<div style="position:absolute;left:40px;top:464px;width:1px;height:19px;background:#e9edf2"></div>
<div style="position:absolute;left:116px;top:464px;width:1px;height:19px;background:#e9edf2"></div>
<div style="position:absolute;left:190px;top:464px;width:1px;height:19px;background:#e9edf2"></div>
<div style="position:absolute;left:412px;top:464px;width:1px;height:19px;background:#e9edf2"></div>
<div style="position:absolute;left:492px;top:464px;width:1px;height:19px;background:#e9edf2"></div>
<div style="position:absolute;left:565px;top:464px;width:1px;height:19px;background:#e9edf2"></div>
<div style="position:absolute;left:629px;top:464px;width:1px;height:19px;background:#e9edf2"></div>
<div style="position:absolute;left:763px;top:464px;width:1px;height:19px;background:#e9edf2"></div>
<div style="position:absolute;left:157px;top:497px;width:60px;height:15px;border:1px solid #b0b0b0;border-radius:2px;background:linear-gradient(#f8f8f8,#e8e8e8 50%,#d6d6d6);display:flex;align-items:center;justify-content:center;color:#3a3a3a;font-size:9px;letter-spacing:0.15px;padding-top:0;box-sizing:content-box;-webkit-text-stroke:0.15px #3a3a3a">Atgriezties</div>
</body></html>
